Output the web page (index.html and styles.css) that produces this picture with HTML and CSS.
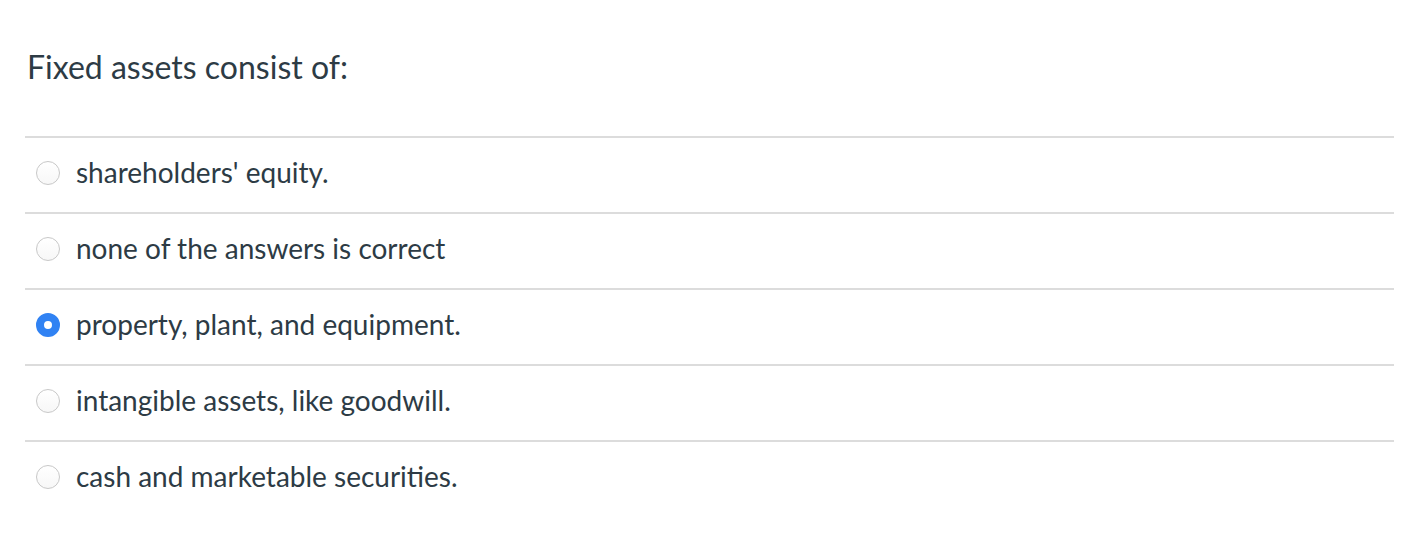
FILE: index.html
```html
<!DOCTYPE html>
<html>
<head>
<meta charset="utf-8">
<link rel="stylesheet" href="styles.css">
</head>
<body>
<div class="question">
  <div class="question-text">Fixed assets consist of:</div>
  <div class="answers">
    <label class="answer"><span class="radio"></span><span class="answer-text">shareholders' equity.</span></label>
    <label class="answer"><span class="radio"></span><span class="answer-text">none of the answers is correct</span></label>
    <label class="answer"><span class="radio selected"></span><span class="answer-text">property, plant, and equipment.</span></label>
    <label class="answer"><span class="radio"></span><span class="answer-text">intangible assets, like goodwill.</span></label>
    <label class="answer"><span class="radio"></span><span class="answer-text">cash and marketable securities.</span></label>
  </div>
</div>
</body>
</html>
```

FILE: styles.css
```css
html, body {
  margin: 0;
  padding: 0;
  background: #ffffff;
}
body {
  font-family: Lato, "Liberation Sans", sans-serif;
  color: #2d3b45;
}
.question {
  padding: 0 26px 0 25px;
}
.question-text {
  font-size: 32px;
  line-height: 40px;
  padding: 47px 0 0 2px;
  height: 136px;
  box-sizing: border-box;
}
.answers {
  display: flex;
  flex-direction: column;
}
.answer {
  display: flex;
  align-items: flex-start;
  height: 76px;
  box-sizing: border-box;
  border-top: 2px solid #dcdcdc;
  padding: 17px 0 0 11px;
}
.radio {
  width: 24px;
  height: 24px;
  margin-top: 6px;
  border-radius: 50%;
  box-sizing: border-box;
  border: 1px solid #c8c8c8;
  background: linear-gradient(#ffffff, #f7f7f7);
  flex: none;
}
.radio.selected {
  border: 8px solid #3082f3;
  background: #ffffff;
}
.answer-text {
  margin-left: 16px;
  font-size: 28px;
  line-height: 34px;
}
```
